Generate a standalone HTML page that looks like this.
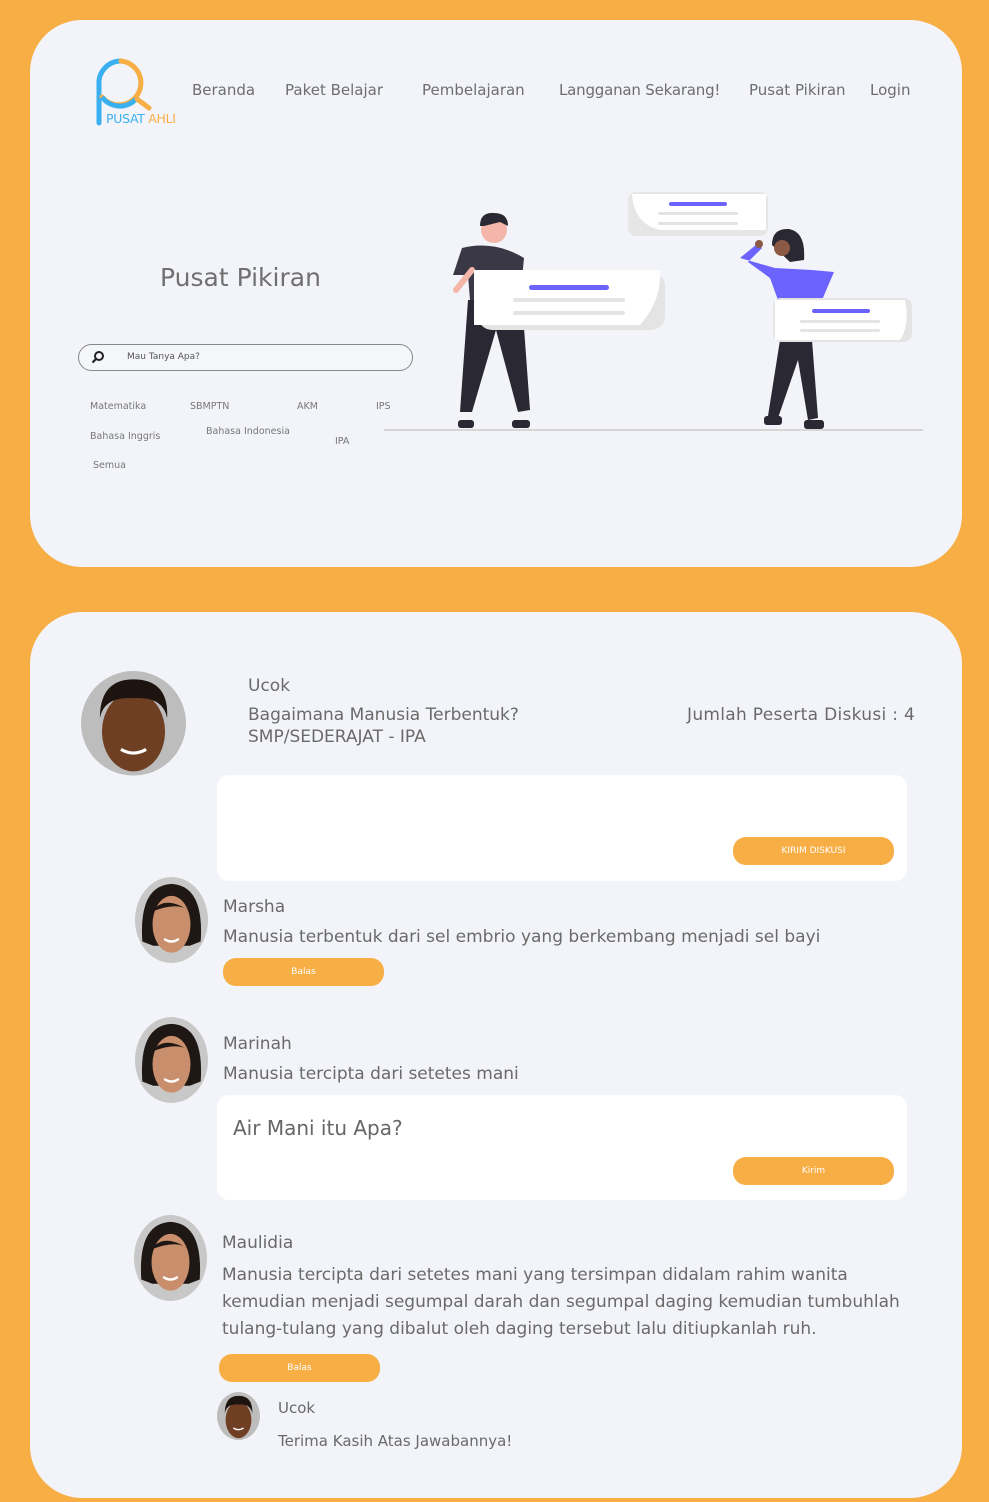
<!DOCTYPE html>
<html><head><meta charset="utf-8"><style>
*{margin:0;padding:0;box-sizing:border-box}
body{width:989px;height:1502px;background:#F7AE45;position:relative;overflow:hidden;font-family:"DejaVu Sans","Liberation Sans",sans-serif;color:#6a6a6a}
.card{position:absolute;left:30px;width:932px;background:#F3F4F9;border-radius:52px}
.a{position:absolute;white-space:nowrap}
.nav{font-size:15px;top:81px;color:#6e6e6e}
.tag{font-size:9.5px;color:#777}
.btn{position:absolute;background:#F7AE45;border-radius:13px;color:#fff;font-size:9px;text-align:center}
.box{position:absolute;background:#fff;border-radius:12px}
.t{font-size:17px;color:#6a6a6a}
</style></head><body>
<div class="card" style="top:20px;height:547px"></div>
<div class="card" style="top:612px;height:886px"></div>

<svg class="a" style="left:92px;top:55px" width="65" height="72" viewBox="0 0 65 72">
<path d="M7 68 V30 A22 22 0 0 1 29 6" fill="none" stroke="#3AB0F0" stroke-width="5" stroke-linecap="round"/>
<path d="M29 6 A22 22 0 1 1 10 42" fill="none" stroke="#F7AE45" stroke-width="5" stroke-linecap="round"/>
<path d="M10 42 A22 22 0 0 0 44 44" fill="none" stroke="#3AB0F0" stroke-width="5"/>
<line x1="45" y1="44" x2="57" y2="53" stroke="#F7AE45" stroke-width="5" stroke-linecap="round"/>
</svg>
<div class="a" style="left:106px;top:111px;font-size:12.5px;color:#3AB0F0;letter-spacing:-0.3px">PUSAT <span style="color:#F7AE45">AHLI</span></div>

<div class="a nav" style="left:192px">Beranda</div>
<div class="a nav" style="left:285px">Paket Belajar</div>
<div class="a nav" style="left:422px">Pembelajaran</div>
<div class="a nav" style="left:559px;letter-spacing:-0.2px">Langganan Sekarang!</div>
<div class="a nav" style="left:749px">Pusat Pikiran</div>
<div class="a nav" style="left:870px">Login</div>

<div class="a" style="left:160px;top:263px;font-size:25px;color:#707070">Pusat Pikiran</div>

<div class="a" style="left:78px;top:344px;width:335px;height:27px;border:1px solid #888;border-radius:14px;background:#F5F6FA"></div>
<svg class="a" style="left:91px;top:350px" width="14" height="14" viewBox="0 0 14 14"><circle cx="8" cy="6" r="4" fill="none" stroke="#222" stroke-width="2"/><line x1="5" y1="9" x2="1.5" y2="12.5" stroke="#222" stroke-width="2.2"/></svg>
<div class="a" style="left:127px;top:352px;font-size:9px;color:#555">Mau Tanya Apa?</div>

<div class="a tag" style="left:90px;top:401px">Matematika</div>
<div class="a tag" style="left:190px;top:401px">SBMPTN</div>
<div class="a tag" style="left:297px;top:401px">AKM</div>
<div class="a tag" style="left:376px;top:401px">IPS</div>
<div class="a tag" style="left:90px;top:431px">Bahasa Inggris</div>
<div class="a tag" style="left:206px;top:426px">Bahasa Indonesia</div>
<div class="a tag" style="left:335px;top:436px">IPA</div>
<div class="a tag" style="left:93px;top:460px">Semua</div>

<svg class="a" style="left:380px;top:150px" width="545" height="285" viewBox="380 150 545 285">
<line x1="384" y1="430" x2="923" y2="430" stroke="#ccc" stroke-width="1.5"/>
<circle cx="494" cy="230" r="13" fill="#f4b6a8"/>
<path d="M480 226 Q480 212 494 213 Q508 213 508 226 L500 222 L484 226Z" fill="#2a2832"/>
<path d="M462 248 Q494 240 524 258 L520 300 L470 300 L468 275 L453 275Z" fill="#3a3845"/>
<path d="M468 300 L522 300 L530 410 L518 412 L496 330 L472 412 L460 412Z" fill="#2a2832"/>
<rect x="458" y="420" width="16" height="8" rx="3" fill="#2a2832"/><rect x="512" y="420" width="18" height="8" rx="3" fill="#2a2832"/>
<path d="M472 270 L456 290" stroke="#f4b6a8" stroke-width="6" stroke-linecap="round"/>
<rect x="478" y="272" width="187" height="58" rx="14" fill="#e4e4e4"/>
<path d="M474 270 H660 Q662 300 640 325 H474Z" fill="#fff"/>
<rect x="529" y="285" width="80" height="5" rx="2.5" fill="#6c63ff"/>
<rect x="513" y="298" width="112" height="4" rx="2" fill="#e4e4e4"/><rect x="513" y="311" width="112" height="4" rx="2" fill="#e4e4e4"/>
<rect x="628" y="192" width="140" height="44" rx="8" fill="#e6e6e6"/>
<path d="M632 194 H766 V230 H660 Q634 224 632 194Z" fill="#fff"/>
<rect x="669" y="202" width="58" height="4" rx="2" fill="#6c63ff"/>
<rect x="658" y="212" width="80" height="3" rx="1.5" fill="#e4e4e4"/><rect x="658" y="222" width="80" height="3" rx="1.5" fill="#e4e4e4"/>
<path d="M772 245 Q772 228 789 229 Q806 232 804 260 L790 262Z" fill="#2a2832"/>
<circle cx="782" cy="248" r="8" fill="#8b5a44"/>
<path d="M757 244 L740 258 L775 268 L812 270 L834 272 L822 300 L800 300 L778 300 L770 278 L748 262 L762 248Z" fill="#6c63ff"/>
<circle cx="759" cy="244" r="4" fill="#8b5a44"/>
<path d="M780 340 L812 340 L818 418 L808 420 L798 360 L778 418 L768 416Z" fill="#2a2832"/>
<rect x="764" y="416" width="18" height="9" rx="3" fill="#2a2832"/><rect x="804" y="420" width="20" height="9" rx="3" fill="#2a2832"/>
<rect x="773" y="298" width="139" height="44" rx="8" fill="#e4e4e4"/>
<path d="M775 300 H905 Q910 325 900 340 H775Z" fill="#fff"/>
<rect x="812" y="309" width="58" height="4" rx="2" fill="#6c63ff"/>
<rect x="800" y="320" width="80" height="3" rx="1.5" fill="#e4e4e4"/><rect x="800" y="329" width="80" height="3" rx="1.5" fill="#e4e4e4"/>
</svg>

<svg width="0" height="0" style="position:absolute"><defs>
<g id="man"><circle cx="50" cy="50" r="50" fill="#bdbdbd"/><ellipse cx="50" cy="58" rx="30" ry="38" fill="#6e3f22"/><path d="M18 45 Q18 8 50 8 Q84 8 82 45 Q78 24 50 26 Q22 24 18 45Z" fill="#1d1410"/><path d="M38 75 Q50 82 62 75" stroke="#fff" stroke-width="3" fill="none"/></g>
<g id="woman"><circle cx="50" cy="50" r="50" fill="#c8c8c8"/><path d="M10 75 Q5 10 50 8 Q95 10 90 75 L75 80 L25 80Z" fill="#1e1714"/><ellipse cx="50" cy="55" rx="26" ry="33" fill="#c98e6b"/><path d="M24 40 Q40 20 76 40 Q60 28 24 40Z" fill="#1e1714"/><path d="M40 72 Q50 78 60 72" stroke="#fff" stroke-width="3" fill="none"/></g>
</defs></svg>
<svg class="a" style="left:81px;top:671px" width="105" height="115" viewBox="0 0 100 110" preserveAspectRatio="none"><use href="#man"/></svg>
<svg class="a" style="left:135px;top:877px" width="73" height="86" viewBox="0 0 100 100" preserveAspectRatio="none"><use href="#woman"/></svg>
<svg class="a" style="left:135px;top:1017px" width="73" height="86" viewBox="0 0 100 100" preserveAspectRatio="none"><use href="#woman"/></svg>
<svg class="a" style="left:134px;top:1215px" width="73" height="86" viewBox="0 0 100 100" preserveAspectRatio="none"><use href="#woman"/></svg>
<svg class="a" style="left:217px;top:1392px" width="43" height="48" viewBox="0 0 100 100" preserveAspectRatio="none"><use href="#man"/></svg>

<div class="a t" style="left:248px;top:676px">Ucok</div>
<div class="a t" style="left:248px;top:705px">Bagaimana Manusia Terbentuk?</div>
<div class="a t" style="left:248px;top:727px">SMP/SEDERAJAT - IPA</div>
<div class="a t" style="left:687px;top:705px;letter-spacing:0.3px">Jumlah Peserta Diskusi : 4</div>

<div class="box" style="left:217px;top:775px;width:690px;height:106px"></div>
<div class="btn" style="left:733px;top:837px;width:161px;height:28px;line-height:28px">KIRIM DISKUSI</div>

<div class="a t" style="left:223px;top:897px">Marsha</div>
<div class="a t" style="left:223px;top:927px">Manusia terbentuk dari sel embrio yang berkembang menjadi sel bayi</div>
<div class="btn" style="left:223px;top:958px;width:161px;height:28px;line-height:28px">Balas</div>

<div class="a t" style="left:223px;top:1034px">Marinah</div>
<div class="a t" style="left:223px;top:1064px">Manusia tercipta dari setetes mani</div>
<div class="box" style="left:217px;top:1095px;width:690px;height:105px"></div>
<div class="a" style="left:233px;top:1116px;font-size:20px;color:#666">Air Mani itu Apa?</div>
<div class="btn" style="left:733px;top:1157px;width:161px;height:28px;line-height:28px">Kirim</div>

<div class="a t" style="left:222px;top:1233px">Maulidia</div>
<div class="a t" style="left:222px;top:1262px;line-height:27px">Manusia tercipta dari setetes mani yang tersimpan didalam rahim wanita<br>kemudian menjadi segumpal darah dan segumpal daging kemudian tumbuhlah<br>tulang-tulang yang dibalut oleh daging tersebut lalu ditiupkanlah ruh.</div>
<div class="btn" style="left:219px;top:1354px;width:161px;height:28px;line-height:28px">Balas</div>

<div class="a" style="left:278px;top:1399px;font-size:15px">Ucok</div>
<div class="a" style="left:278px;top:1432px;font-size:15px">Terima Kasih Atas Jawabannya!</div>
</body></html>
